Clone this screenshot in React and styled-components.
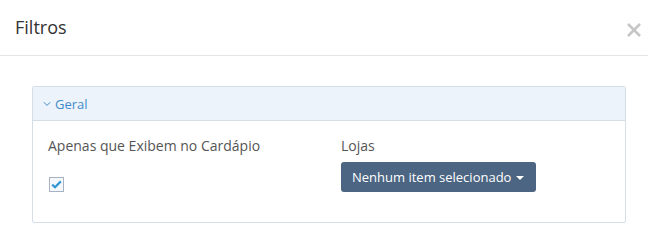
import React from "react";
import styled, { createGlobalStyle } from "styled-components";

const Global = createGlobalStyle`
  html, body { margin: 0; padding: 0; background: #fff; }
  body { font-family: "Open Sans", "Liberation Sans", sans-serif; color: #555; }
`;

const Modal = styled.div`
  width: 648px;
  height: 226px;
  background: #fff;
  overflow: hidden;
`;

const Header = styled.div`
  display: flex;
  align-items: center;
  justify-content: space-between;
  height: 55px;
  padding: 0 6px 0 15px;
  border-bottom: 1px solid #e5e5e5;
  box-sizing: content-box;
`;

const Title = styled.h4`
  margin: 0;
  font-size: 18px;
  font-weight: 400;
  color: #333;
  line-height: 25px;
`;

const Close = styled.button`
  border: 0;
  background: none;
  padding: 0;
  cursor: pointer;
  width: 16px;
  height: 16px;
  display: flex;
  align-items: center;
  justify-content: center;
  margin-top: 4px;
`;

const Body = styled.div`
  padding: 30px 22px 0 32px;
`;

const Panel = styled.div`
  border: 1px solid #d5dde6;
  border-radius: 2px;
`;

const PanelHeading = styled.div`
  display: flex;
  align-items: center;
  gap: 4px;
  height: 33px;
  padding: 0 10px;
  background: #edf3fa;
  border-bottom: 1px solid #d5dde6;
  color: #3f8ccb;
  font-size: 13px;
  font-weight: 500;
`;

const PanelBody = styled.div`
  display: grid;
  grid-template-columns: 293px 1fr;
  padding: 15px;
`;

const Field = styled.div`
  display: flex;
  flex-direction: column;
  align-items: flex-start;
  padding-bottom: 15px;
`;

const Label = styled.label`
  font-size: 14px;
  line-height: 20px;
  color: #555;
  margin-bottom: ${(p) => p.$gap}px;
`;

const CheckBox = styled.span`
  width: 13px;
  height: 13px;
  border: 1px solid #a7b3c1;
  background: #f5f8fb;
  display: flex;
  align-items: center;
  justify-content: center;
  margin-left: 1px;
  margin-top: 1px;
`;

const Dropdown = styled.button`
  display: inline-flex;
  align-items: center;
  gap: 5px;
  height: 30px;
  padding: 0 12px 0 11px;
  border: 0;
  border-radius: 3px;
  background: #4b6582;
  color: #fff;
  font-family: "Open Sans", "Liberation Sans", sans-serif;
  font-size: 13px;
  cursor: pointer;
`;

const Caret = styled.span`
  width: 0;
  height: 0;
  border-left: 4px solid transparent;
  border-right: 4px solid transparent;
  border-top: 4px solid #fff;
  margin-top: 1px;
`;

export default function App() {
  return (
    <>
      <Global />
      <Modal>
        <Header>
          <Title>Filtros</Title>
          <Close aria-label="Fechar">
            <svg width="16" height="16" viewBox="0 0 16 16">
              <path d="M2 2 L14 14 M14 2 L2 14" stroke="#c6c6c6" strokeWidth="2.6" strokeLinecap="butt" />
            </svg>
          </Close>
        </Header>
        <Body>
          <Panel>
            <PanelHeading>
              <svg width="8" height="6" viewBox="0 0 8 6">
                <path d="M0.8 1.2 L4 4.4 L7.2 1.2" stroke="#3f8ccb" strokeWidth="1" fill="none" />
              </svg>
              <span>Geral</span>
            </PanelHeading>
            <PanelBody>
              <Field>
                <Label $gap={20}>Apenas que Exibem no Cardápio</Label>
                <CheckBox>
                  <svg width="11" height="9" viewBox="0 0 11 9">
                    <path d="M1.2 4.6 L4 7.2 L9.8 1.4" stroke="#2f97d6" strokeWidth="2.2" fill="none" />
                  </svg>
                </CheckBox>
              </Field>
              <Field>
                <Label $gap={6}>Lojas</Label>
                <Dropdown>
                  Nenhum item selecionado
                  <Caret />
                </Dropdown>
              </Field>
            </PanelBody>
          </Panel>
        </Body>
      </Modal>
    </>
  );
}
